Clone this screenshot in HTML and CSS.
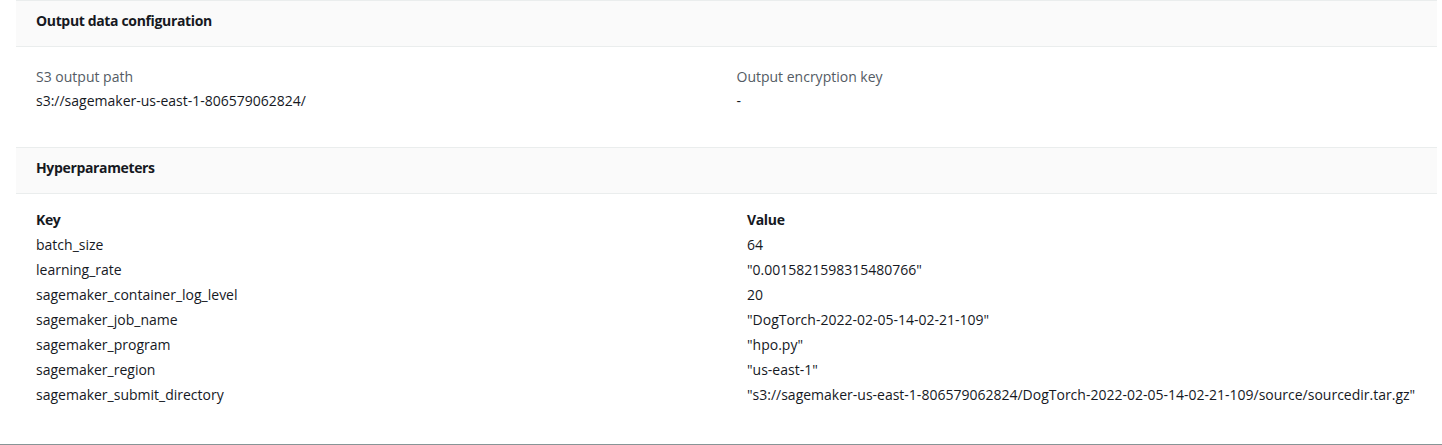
FILE: index.html
```html
<!DOCTYPE html>
<html lang="en">
<head>
<meta charset="utf-8">
<title>Training job details</title>
<link rel="stylesheet" href="styles.css">
</head>
<body>
<div class="page">
  <section class="panel panel-output">
    <div class="panel-header"><h2 class="panel-title">Output data configuration</h2></div>
    <div class="panel-body kv-grid">
      <div class="kv">
        <div class="kv-label">S3 output path</div>
        <div class="kv-value">s3://sagemaker-us-east-1-806579062824/</div>
      </div>
      <div class="kv">
        <div class="kv-label">Output encryption key</div>
        <div class="kv-value">-</div>
      </div>
    </div>
  </section>
  <section class="panel panel-hyper">
    <div class="panel-header"><h2 class="panel-title">Hyperparameters</h2></div>
    <div class="panel-body table-body">
      <div class="hp-table">
        <div class="hp-row hp-head"><div>Key</div><div>Value</div></div>
        <div class="hp-row"><div>batch_size</div><div>64</div></div>
        <div class="hp-row"><div>learning_rate</div><div>"0.0015821598315480766"</div></div>
        <div class="hp-row"><div>sagemaker_container_log_level</div><div>20</div></div>
        <div class="hp-row"><div>sagemaker_job_name</div><div>"DogTorch-2022-02-05-14-02-21-109"</div></div>
        <div class="hp-row"><div>sagemaker_program</div><div>"hpo.py"</div></div>
        <div class="hp-row"><div>sagemaker_region</div><div>"us-east-1"</div></div>
        <div class="hp-row"><div>sagemaker_submit_directory</div><div>"s3://sagemaker-us-east-1-806579062824/DogTorch-2022-02-05-14-02-21-109/source/sourcedir.tar.gz"</div></div>
      </div>
    </div>
  </section>
</div>
<div class="divider"></div>
</body>
</html>
```

FILE: styles.css
```css
* { box-sizing: border-box; }
html, body { margin: 0; padding: 0; background: #ffffff; }
body {
  font-family: "Open Sans", "Noto Sans", "Liberation Sans", sans-serif;
  font-size: 14px;
  color: #16191f;
  overflow: hidden;
}
.page {
  padding: 0 5px 0 16px;
}
.panel-header {
  height: 47px;
  padding: 10px 20px 0;
  background: #fafafa;
  border-top: 1px solid #eaeded;
  border-bottom: 1px solid #eaeded;
}
.panel-title {
  margin: 0;
  font-size: 14px;
  line-height: 20px;
  font-weight: 700;
  letter-spacing: -0.35px;
  color: #16191f;
}
.kv-grid {
  display: grid;
  grid-template-columns: 1fr 1fr;
  column-gap: 20px;
  padding: 20px 20px 20px;
  margin-bottom: 16px;
}
.kv-label {
  color: #545b64;
  line-height: 20px;
  margin-bottom: 4px;
}
.kv-value {
  line-height: 20px;
}
.table-body {
  padding: 13px 20px 37px;
}
.hp-row {
  display: grid;
  grid-template-columns: 711px 1fr;
  line-height: 25px;
  white-space: nowrap;
}
.hp-head { font-weight: 700; letter-spacing: -0.35px; }
.divider {
  height: 1px;
  background: #879596;
}
```
